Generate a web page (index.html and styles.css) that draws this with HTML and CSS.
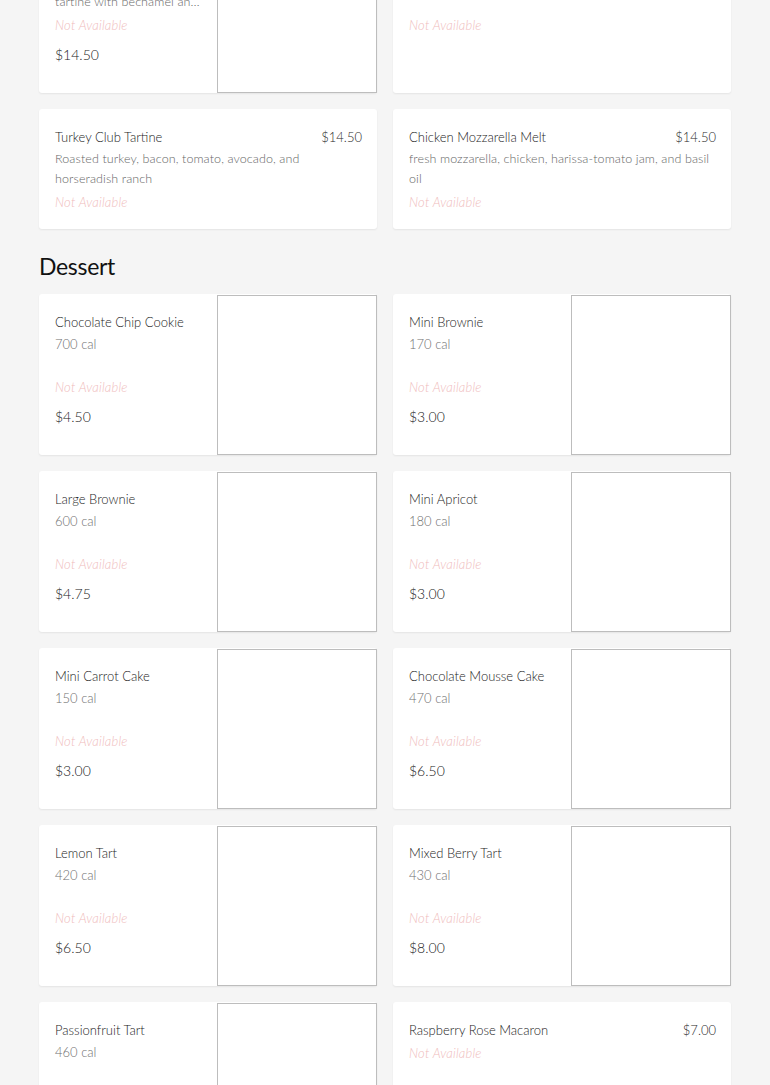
FILE: index.html
```html
<!doctype html>
<html lang="en">
<head>
	<meta charset="UTF-8">
	<title>Menu</title>
	<link rel="stylesheet" href="styles.css">
</head>
<body>
	<div class="menu">
		<!-- tartines, scrolled partly out of view -->
		<section class="category category-top">
			<div class="items">
				<div class="item">
					<div class="item-info">
						<div class="item-name">Croque Monsieur</div>
						<div class="item-desc clamp">Ham and gruy&egrave;re cheese tartine with bechamel and dijon mustard</div>
						<div class="item-status">Not Available</div>
						<div class="item-price">$14.50</div>
					</div>
					<div class="item-photo"></div>
				</div>
				<div class="item">
					<div class="item-info">
						<div class="item-head">
							<span class="item-name">Avocado Tartine</span>
							<span class="item-price-side">$13.00</span>
						</div>
						<div class="item-cal">520 cal</div>
						<div class="item-status">Not Available</div>
					</div>
				</div>
				<div class="item">
					<div class="item-info">
						<div class="item-head">
							<span class="item-name">Turkey Club Tartine</span>
							<span class="item-price-side">$14.50</span>
						</div>
						<div class="item-desc">Roasted turkey, bacon, tomato, avocado, and horseradish ranch</div>
						<div class="item-status">Not Available</div>
					</div>
				</div>
				<div class="item">
					<div class="item-info">
						<div class="item-head">
							<span class="item-name">Chicken Mozzarella Melt</span>
							<span class="item-price-side">$14.50</span>
						</div>
						<div class="item-desc">fresh mozzarella, chicken, harissa-tomato jam, and basil oil</div>
						<div class="item-status">Not Available</div>
					</div>
				</div>
			</div>
		</section>

		<section class="category">
			<h2 class="category-title">Dessert</h2>
			<div class="items">
				<div class="item">
					<div class="item-info">
						<div class="item-name">Chocolate Chip Cookie</div>
						<div class="item-cal">700 cal</div>
						<div class="item-status">Not Available</div>
						<div class="item-price">$4.50</div>
					</div>
					<div class="item-photo"></div>
				</div>
				<div class="item">
					<div class="item-info">
						<div class="item-name">Mini Brownie</div>
						<div class="item-cal">170 cal</div>
						<div class="item-status">Not Available</div>
						<div class="item-price">$3.00</div>
					</div>
					<div class="item-photo"></div>
				</div>
				<div class="item">
					<div class="item-info">
						<div class="item-name">Large Brownie</div>
						<div class="item-cal">600 cal</div>
						<div class="item-status">Not Available</div>
						<div class="item-price">$4.75</div>
					</div>
					<div class="item-photo"></div>
				</div>
				<div class="item">
					<div class="item-info">
						<div class="item-name">Mini Apricot</div>
						<div class="item-cal">180 cal</div>
						<div class="item-status">Not Available</div>
						<div class="item-price">$3.00</div>
					</div>
					<div class="item-photo"></div>
				</div>
				<div class="item">
					<div class="item-info">
						<div class="item-name">Mini Carrot Cake</div>
						<div class="item-cal">150 cal</div>
						<div class="item-status">Not Available</div>
						<div class="item-price">$3.00</div>
					</div>
					<div class="item-photo"></div>
				</div>
				<div class="item">
					<div class="item-info">
						<div class="item-name">Chocolate Mousse Cake</div>
						<div class="item-cal">470 cal</div>
						<div class="item-status">Not Available</div>
						<div class="item-price">$6.50</div>
					</div>
					<div class="item-photo"></div>
				</div>
				<div class="item">
					<div class="item-info">
						<div class="item-name">Lemon Tart</div>
						<div class="item-cal">420 cal</div>
						<div class="item-status">Not Available</div>
						<div class="item-price">$6.50</div>
					</div>
					<div class="item-photo"></div>
				</div>
				<div class="item">
					<div class="item-info">
						<div class="item-name">Mixed Berry Tart</div>
						<div class="item-cal">430 cal</div>
						<div class="item-status">Not Available</div>
						<div class="item-price">$8.00</div>
					</div>
					<div class="item-photo"></div>
				</div>
				<div class="item">
					<div class="item-info">
						<div class="item-name">Passionfruit Tart</div>
						<div class="item-cal">460 cal</div>
						<div class="item-status">Not Available</div>
						<div class="item-price">$6.50</div>
					</div>
					<div class="item-photo"></div>
				</div>
				<div class="item">
					<div class="item-info">
						<div class="item-head">
							<span class="item-name">Raspberry Rose Macaron</span>
							<span class="item-price-side">$7.00</span>
						</div>
						<div class="item-status">Not Available</div>
					</div>
				</div>
			</div>
		</section>
	</div>
</body>
</html>
```

FILE: styles.css
```css
body {
	margin: 0;
	padding: 0;
	background: #f5f5f5;
	color: #222;
	font: 300 13px/1.4 Lato, "Liberation Sans", sans-serif;
}
.menu {
	padding: 0 39px 40px;
}
/* 页面已经向下滚动 */
.category-top {
	margin-top: -68px;
}
.category-title {
	margin: 21px 0 12px;
	font-size: 23px;
	line-height: 32px;
	font-weight: normal;
	letter-spacing: -0.3px;
	color: #111;
}
.items {
	display: grid;
	grid-template-columns: 1fr 1fr;
	gap: 16px;
}
/* 菜品卡片 */
.item {
	display: flex;
	background: #fff;
	border-radius: 3px;
	box-shadow: 0 1px 2px rgba(0, 0, 0, .07);
}
.item-info {
	flex: 1;
	min-width: 0;
	padding: 16px 15px 16px 16px;
}
.item-photo {
	flex: none;
	width: 160px;
	height: 160px;
	margin-top: 1px;
	border: 1px solid #bdbdbd;
	box-sizing: border-box;
	background: #fff;
}
.item-head {
	display: flex;
	justify-content: space-between;
	gap: 10px;
}
.item-name {
	display: block;
	font-size: 13px;
	line-height: 24px;
	color: #1c1c1c;
}
.item-price-side {
	font-size: 13px;
	line-height: 24px;
	color: #2a2a2a;
}
.item-cal {
	font-size: 13px;
	line-height: 20px;
	color: #707070;
	margin-bottom: 22px;
}
.item-desc {
	font-size: 12.5px;
	line-height: 20px;
	letter-spacing: 0.1px;
	color: #666;
	margin-bottom: 2px;
}
.clamp {
	display: -webkit-box;
	-webkit-line-clamp: 2;
	-webkit-box-orient: vertical;
	overflow: hidden;
}
.item-status {
	font-size: 13px;
	line-height: 22px;
	font-style: italic;
	letter-spacing: 0.2px;
	color: #efbcbc;
}
.item-price {
	margin-top: 8px;
	font-size: 14px;
	line-height: 22px;
	color: #222;
}
```
